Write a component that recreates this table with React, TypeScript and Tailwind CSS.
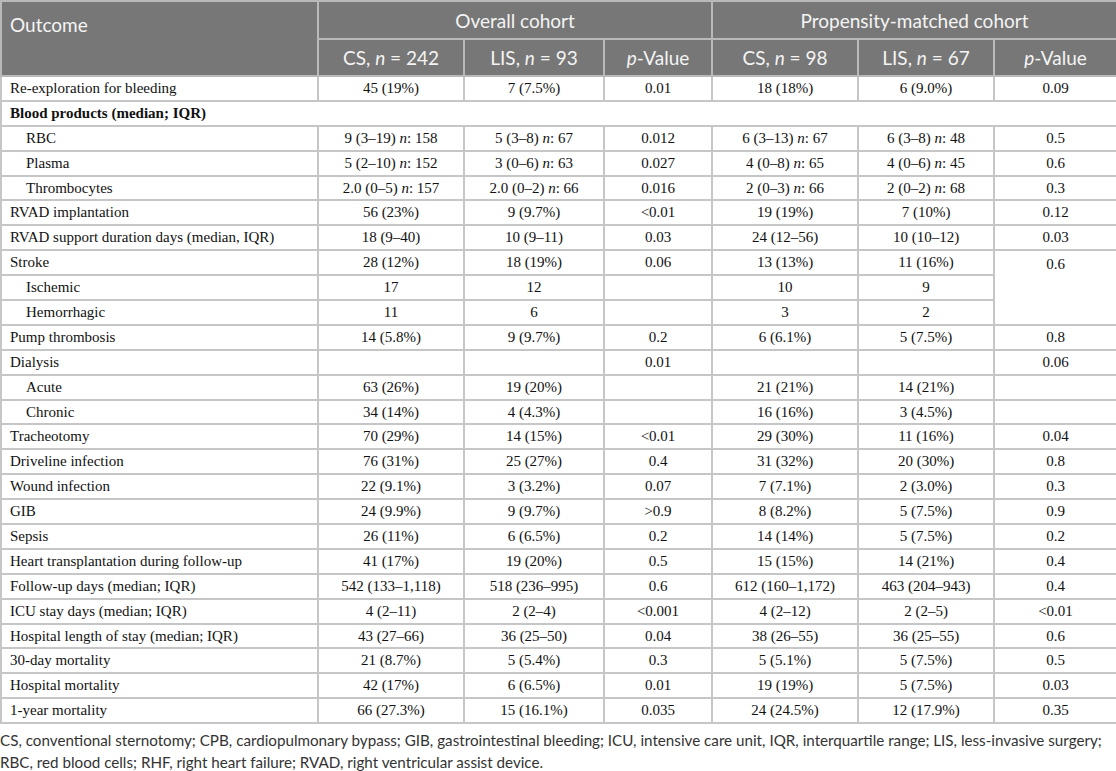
import React from "react";

// Tabla de resultados: cohorte total y cohorte emparejada
type Row = {
  label: string;
  indent?: boolean;
  group?: boolean;
  cells?: React.ReactNode[];
};

const N = () => <i>n</i>;

const withN = (v: string, n: string) => (
  <>
    {v} <N />: {n}
  </>
);

const rows: Row[] = [
  { label: "Re-exploration for bleeding", cells: ["45 (19%)", "7 (7.5%)", "0.01", "18 (18%)", "6 (9.0%)", "0.09"] },
  { label: "Blood products (median; IQR)", group: true },
  { label: "RBC", indent: true, cells: [withN("9 (3–19)", "158"), withN("5 (3–8)", "67"), "0.012", withN("6 (3–13)", "67"), withN("6 (3–8)", "48"), "0.5"] },
  { label: "Plasma", indent: true, cells: [withN("5 (2–10)", "152"), withN("3 (0–6)", "63"), "0.027", withN("4 (0–8)", "65"), withN("4 (0–6)", "45"), "0.6"] },
  { label: "Thrombocytes", indent: true, cells: [withN("2.0 (0–5)", "157"), withN("2.0 (0–2)", "66"), "0.016", withN("2 (0–3)", "66"), withN("2 (0–2)", "68"), "0.3"] },
  { label: "RVAD implantation", cells: ["56 (23%)", "9 (9.7%)", "<0.01", "19 (19%)", "7 (10%)", "0.12"] },
  { label: "RVAD support duration days (median, IQR)", cells: ["18 (9–40)", "10 (9–11)", "0.03", "24 (12–56)", "10 (10–12)", "0.03"] },
];

const rowsAfter: Row[] = [
  { label: "Pump thrombosis", cells: ["14 (5.8%)", "9 (9.7%)", "0.2", "6 (6.1%)", "5 (7.5%)", "0.8"] },
  { label: "Dialysis", cells: ["", "", "0.01", "", "", "0.06"] },
  { label: "Acute", indent: true, cells: ["63 (26%)", "19 (20%)", "", "21 (21%)", "14 (21%)", ""] },
  { label: "Chronic", indent: true, cells: ["34 (14%)", "4 (4.3%)", "", "16 (16%)", "3 (4.5%)", ""] },
  { label: "Tracheotomy", cells: ["70 (29%)", "14 (15%)", "<0.01", "29 (30%)", "11 (16%)", "0.04"] },
  { label: "Driveline infection", cells: ["76 (31%)", "25 (27%)", "0.4", "31 (32%)", "20 (30%)", "0.8"] },
  { label: "Wound infection", cells: ["22 (9.1%)", "3 (3.2%)", "0.07", "7 (7.1%)", "2 (3.0%)", "0.3"] },
  { label: "GIB", cells: ["24 (9.9%)", "9 (9.7%)", ">0.9", "8 (8.2%)", "5 (7.5%)", "0.9"] },
  { label: "Sepsis", cells: ["26 (11%)", "6 (6.5%)", "0.2", "14 (14%)", "5 (7.5%)", "0.2"] },
  { label: "Heart transplantation during follow-up", cells: ["41 (17%)", "19 (20%)", "0.5", "15 (15%)", "14 (21%)", "0.4"] },
  { label: "Follow-up days (median; IQR)", cells: ["542 (133–1,118)", "518 (236–995)", "0.6", "612 (160–1,172)", "463 (204–943)", "0.4"] },
  { label: "ICU stay days (median; IQR)", cells: ["4 (2–11)", "2 (2–4)", "<0.001", "4 (2–12)", "2 (2–5)", "<0.01"] },
  { label: "Hospital length of stay (median; IQR)", cells: ["43 (27–66)", "36 (25–50)", "0.04", "38 (26–55)", "36 (25–55)", "0.6"] },
  { label: "30-day mortality", cells: ["21 (8.7%)", "5 (5.4%)", "0.3", "5 (5.1%)", "5 (7.5%)", "0.5"] },
  { label: "Hospital mortality", cells: ["42 (17%)", "6 (6.5%)", "0.01", "19 (19%)", "5 (7.5%)", "0.03"] },
  { label: "1-year mortality", cells: ["66 (27.3%)", "15 (16.1%)", "0.035", "24 (24.5%)", "12 (17.9%)", "0.35"] },
];

const td = "border-2 border-[#c6c6c6] h-[24.9px] p-0 text-center whitespace-nowrap";
const th = "border-2 border-[#b9b9b9] font-normal text-center text-[19px] whitespace-nowrap";

function BodyRow({ row }: { row: Row }) {
  if (row.group) {
    return (
      <tr>
        <td colSpan={7} className="border-2 border-[#c6c6c6] h-[24.9px] p-0 pl-2 text-left font-bold">
          {row.label}
        </td>
      </tr>
    );
  }
  return (
    <tr>
      <td className={`border-2 border-[#c6c6c6] h-[24.9px] p-0 text-left whitespace-nowrap ${row.indent ? "pl-6" : "pl-2"}`}>
        {row.label}
      </td>
      {row.cells?.map((c, i) => (
        <td key={i} className={td}>
          {c}
        </td>
      ))}
    </tr>
  );
}

export default function App() {
  return (
    <div className="w-[1116px] bg-white">
      <table className="w-[1116px] table-fixed border-collapse text-[15px] leading-none text-[#111] font-[family-name:'Liberation_Serif',serif]">
        <colgroup>
          <col className="w-[317px]" />
          <col className="w-[146px]" />
          <col className="w-[140px]" />
          <col className="w-[108px]" />
          <col className="w-[146px]" />
          <col className="w-[136px]" />
          <col className="w-[123px]" />
        </colgroup>
        <thead className="bg-[#777777] text-[#f4f4f4] font-[family-name:'Lato',sans-serif]">
          <tr className="h-[38px]">
            <th rowSpan={2} className={`${th} text-left align-top pl-2 pt-[13px]`}>
              Outcome
            </th>
            <th colSpan={3} className={th}>
              Overall cohort
            </th>
            <th colSpan={3} className={th}>
              Propensity-matched cohort
            </th>
          </tr>
          <tr className="h-[37px]">
            <th className={th}>
              CS, <i>n</i> = 242
            </th>
            <th className={th}>
              LIS, <i>n</i> = 93
            </th>
            <th className={th}>
              <i>p</i>-Value
            </th>
            <th className={th}>
              CS, <i>n</i> = 98
            </th>
            <th className={th}>
              LIS, <i>n</i> = 67
            </th>
            <th className={th}>
              <i>p</i>-Value
            </th>
          </tr>
        </thead>
        <tbody>
          {rows.map((r) => (
            <BodyRow key={r.label} row={r} />
          ))}

          {/* Stroke con valor p combinado */}
          <tr>
            <td className="border-2 border-[#c6c6c6] h-[24.9px] p-0 pl-2 text-left">Stroke</td>
            <td className={td}>28 (12%)</td>
            <td className={td}>18 (19%)</td>
            <td className={td}>0.06</td>
            <td className={td}>13 (13%)</td>
            <td className={td}>11 (16%)</td>
            <td rowSpan={3} className={`${td} align-top pt-[6px]`}>
              0.6
            </td>
          </tr>
          <tr>
            <td className="border-2 border-[#c6c6c6] h-[24.9px] p-0 pl-6 text-left">Ischemic</td>
            <td className={td}>17</td>
            <td className={td}>12</td>
            <td className={td}></td>
            <td className={td}>10</td>
            <td className={td}>9</td>
          </tr>
          <tr>
            <td className="border-2 border-[#c6c6c6] h-[24.9px] p-0 pl-6 text-left">Hemorrhagic</td>
            <td className={td}>11</td>
            <td className={td}>6</td>
            <td className={td}></td>
            <td className={td}>3</td>
            <td className={td}>2</td>
          </tr>

          {rowsAfter.map((r) => (
            <BodyRow key={r.label} row={r} />
          ))}
        </tbody>
      </table>

      {/* Nota al pie */}
      <p className="mt-[5px] text-[15.2px] leading-[22px] whitespace-nowrap text-[#333] font-[family-name:'Lato',sans-serif]">
        CS, conventional sternotomy; CPB, cardiopulmonary bypass; GIB, gastrointestinal bleeding; ICU, intensive care unit, IQR, interquartile range; LIS, less-invasive surgery;
        <br />
        RBC, red blood cells; RHF, right heart failure; RVAD, right ventricular assist device.
      </p>
    </div>
  );
}
